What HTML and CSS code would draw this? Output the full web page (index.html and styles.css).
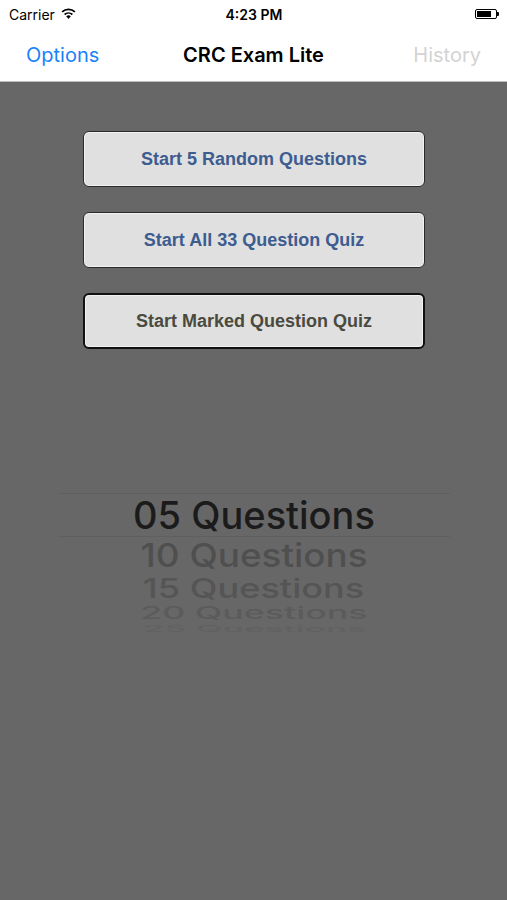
FILE: index.html
```html
<!DOCTYPE html>
<html>
<head>
<title>CRC Exam Lite</title>
<link rel="stylesheet" href="styles.css">
</head>
<body>

<div class="status-bar">
  <div class="carrier">
    Carrier
    <svg class="wifi" width="15" height="11" viewBox="0 0 15 11">
      <path d="M7.5 11 L5.2 8.3 A3.4 3.4 0 0 1 9.8 8.3 Z" fill="#000"/>
      <path d="M3.6 6.5 A5.8 5.8 0 0 1 11.4 6.5" stroke="#000" stroke-width="1.7" fill="none"/>
      <path d="M1.1 3.8 A9.4 9.4 0 0 1 13.9 3.8" stroke="#000" stroke-width="1.7" fill="none"/>
    </svg>
  </div>
  <div class="time">4:23 PM</div>
  <div class="battery-wrap">
    <div class="battery"><div class="battery-level"></div></div>
    <div class="battery-tip"></div>
  </div>
</div>

<div class="nav-bar">
  <span class="nav-left">Options</span>
  <span class="nav-title">CRC Exam Lite</span>
  <span class="nav-right">History</span>
</div>

<div class="content">
  <div class="buttons">
    <button class="quiz-btn">Start 5 Random Questions</button>
    <button class="quiz-btn">Start All 33 Question Quiz</button>
    <button class="quiz-btn marked">Start Marked Question Quiz</button>
  </div>

  <div class="picker">
    <div class="picker-row selected"><span>05 Questions</span></div>
    <div class="picker-row row-1"><span>10 Questions</span></div>
    <div class="picker-row row-2"><span>15 Questions</span></div>
    <div class="picker-row row-3"><span>20 Questions</span></div>
    <div class="picker-row row-4"><span>25 Questions</span></div>
  </div>
</div>

</body>
</html>
```

FILE: styles.css
```css
body {
  margin: 0;
  background-color: #676767;
  font-family: "Liberation Sans", Arial, sans-serif;
  height: 900px;
  overflow: hidden;
}
.status-bar {
  background-color: #fff;
  height: 28px;
  padding: 0 8px 0 9px;
  display: grid;
  grid-template-columns: 1fr auto 1fr;
  align-items: center;
  font-family: Inter, "Liberation Sans", sans-serif;
  font-size: 14px;
}
.carrier {
  display: flex;
  align-items: center;
  gap: 6px;
  color: #000;
}
.wifi {
  margin-top: -2px;
}
.time {
  font-weight: 600;
}
.battery-wrap {
  display: flex;
  align-items: center;
  justify-content: flex-end;
}
.battery {
  width: 22px;
  height: 10px;
  border: 1px solid #000;
  border-radius: 2px;
  padding: 1px;
  box-sizing: border-box;
  display: flex;
}
.battery-level {
  width: 80%;
  background-color: #000;
}
.battery-tip {
  width: 2px;
  height: 4px;
  background-color: #000;
  border-radius: 0 1px 1px 0;
}
.nav-bar {
  background-color: #fff;
  height: 53px;
  border-bottom: 1px solid #bdbdbd;
  padding: 0 26px;
  display: flex;
  align-items: center;
  justify-content: space-between;
  font-family: Inter, "Liberation Sans", sans-serif;
  font-size: 20px;
}
.nav-left {
  color: #1a82fb;
  width: 90px;
}
.nav-title {
  font-weight: 600;
  color: #000;
}
.nav-right {
  color: #d3d3d3;
  width: 90px;
  text-align: right;
}
.content {
  padding-top: 49px;
}
.buttons {
  display: flex;
  flex-direction: column;
  gap: 25px;
  padding-left: 83px;
}
.quiz-btn {
  width: 342px;
  height: 56px;
  background-color: #e0e0e0;
  border: 1.5px solid #2a2a2a;
  border-radius: 6px;
  font-family: "Liberation Sans", Arial, sans-serif;
  font-weight: bold;
  font-size: 18px;
  color: #3d5c8f;
  box-shadow: inset 0 0 0 1px #f2f2f2;
  padding: 0;
}
.quiz-btn.marked {
  border: 2px solid #111;
  color: #4a4a3e;
}
.picker {
  margin: 144px 57px 0 58px;
  font-family: Inter, "Liberation Sans", sans-serif;
  font-weight: 500;
}
.picker-row {
  display: flex;
  justify-content: center;
  align-items: center;
  font-size: 38px;
  line-height: 42px;
  white-space: nowrap;
}
.picker-row.selected {
  height: 42px;
  border-top: 1px solid #5f5f5f;
  border-bottom: 1px solid #5f5f5f;
  color: #1b1b1b;
}
.row-1 {
  height: 35px;
  color: #4f4f4f;
}
.row-1 span {
  transform: scale(0.97, 0.86);
}
.row-2 {
  height: 31px;
  color: #555;
}
.row-2 span {
  transform: scale(0.95, 0.7);
}
.row-3 {
  height: 20px;
  color: #5b5b5b;
}
.row-3 span {
  transform: scale(0.94, 0.44);
}
.row-4 {
  height: 11px;
  color: #616161;
}
.row-4 span {
  transform: scale(0.93, 0.24);
}
```
